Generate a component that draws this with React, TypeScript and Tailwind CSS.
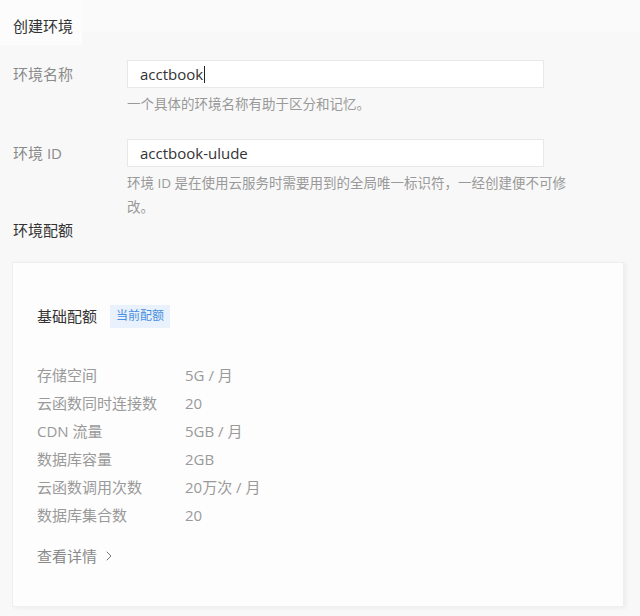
import { ChevronRight } from 'lucide-react';

const quotas = [
  { label: '存储空间', value: '5G / 月' },
  { label: '云函数同时连接数', value: '20' },
  { label: 'CDN 流量', value: '5GB / 月' },
  { label: '数据库容量', value: '2GB' },
  { label: '云函数调用次数', value: '20万次 / 月' },
  { label: '数据库集合数', value: '20' },
];

function Field({ label, value, caret }: { label: string; value: string; caret?: boolean }) {
  return (
    <div className="flex items-center">
      <div className="w-[127px] pl-[13px] text-[15px] leading-[20px] text-[#8a8a8a]">{label}</div>
      <div className="flex h-[28px] w-[417px] items-center border border-[#e8e8e8] bg-white pl-[12px] text-[15px] text-[#333]">
        {value}
        {caret && <span className="ml-[1px] h-[17px] w-[1px] bg-[#222]" />}
      </div>
    </div>
  );
}

export default function App() {
  return (
    <div
      className="h-[616px] w-[640px] overflow-hidden bg-[#f8f8f8]"
      style={{ fontFamily: '"Open Sans", "Noto Sans CJK SC", sans-serif' }}
    >
      <div className="h-[32px] bg-[#fafafa]">
        <div className="flex h-[45px] w-[82px] items-start bg-[#fcfcfc] pl-[13px] pt-[16px] text-[15px] leading-[20px] text-[#333]">
          创建环境
        </div>
      </div>

      <div className="mt-[28px]">
        <Field label="环境名称" value="acctbook" caret />
        <p className="ml-[127px] mt-[4px] text-[13.5px] leading-[24px] text-[#999]">
          一个具体的环境名称有助于区分和记忆。
        </p>

        <div className="mt-[23px]">
          <Field label="环境 ID" value="acctbook-ulude" />
        </div>
        <p className="ml-[127px] mt-[4px] w-[452px] text-[13.5px] leading-[24px] text-[#999]">
          环境 ID 是在使用云服务时需要用到的全局唯一标识符，一经创建便不可修改。
        </p>
      </div>

      <div className="mt-[1px] pl-[13px] text-[15px] leading-[20px] text-[#333]">环境配额</div>

      <div className="ml-[12px] mt-[22px] h-[345px] w-[612px] border border-[#efefef] bg-[#fdfdfd] pl-[24px] pt-[41px] shadow-[2px_1px_4px_rgba(0,0,0,0.05)]">
        <div className="flex h-[24px] items-center">
          <span className="text-[15px] text-[#333]">基础配额</span>
          <span className="ml-[13px] flex h-[23px] items-center bg-[#e9f2fc] px-[6px] text-[12px] text-[#4a8fdf]">
            当前配额
          </span>
        </div>

        <div className="mt-[33px]">
          {quotas.map((q) => (
            <div key={q.label} className="flex h-[28px] items-center text-[15px] text-[#9a9a9a]">
              <span className="w-[148px]">{q.label}</span>
              <span>{q.value}</span>
            </div>
          ))}
        </div>

        <div className="mt-[13px] flex h-[28px] items-center text-[15px] text-[#8a8a8a]">
          查看详情
          <ChevronRight className="ml-[4px] size-[16px] text-[#777]" strokeWidth={1.5} />
        </div>
      </div>
    </div>
  );
}
